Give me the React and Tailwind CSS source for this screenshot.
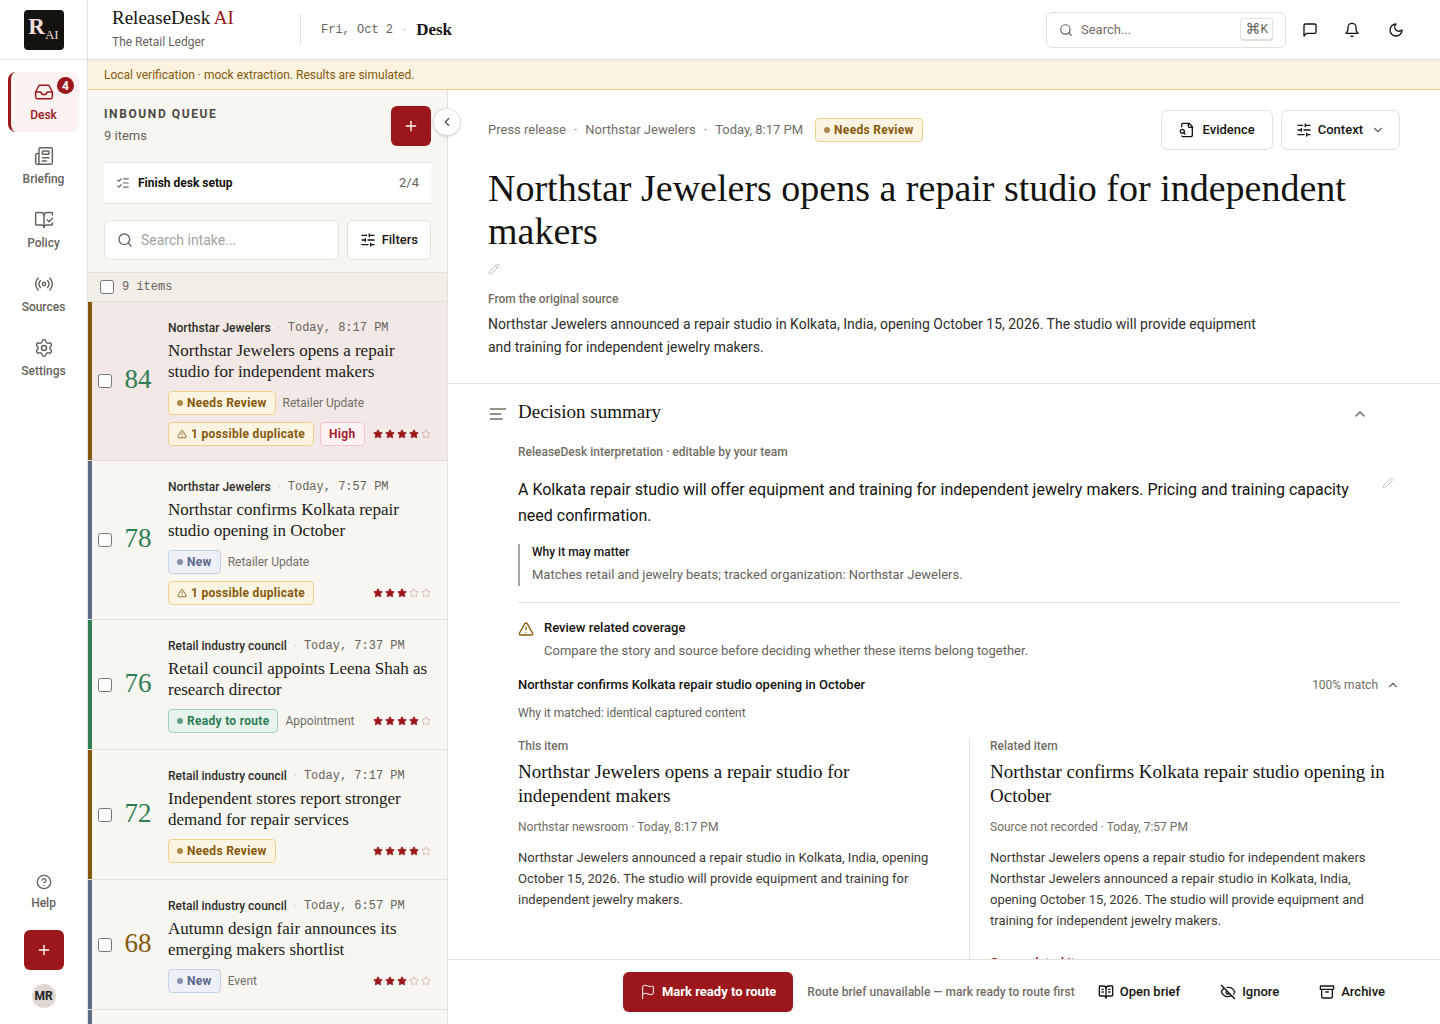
import { useState } from 'react'
import clsx from 'clsx'
import {
  Archive, BookOpenCheck, BookOpenText, ChevronDown, ChevronLeft, ChevronUp, CircleHelp,
  EyeOff, Flag, Inbox, ListChecks, Newspaper, Pencil, Plus, Radio, Search, Settings,
  SlidersHorizontal, Star, TriangleAlert,
} from 'lucide-react'

const SERIF = "font-['Liberation_Serif',serif]"
const MONO = "font-['Liberation_Mono',monospace]"

// --- Icons that are not in the package in this shape ---
function Glyph({ size = 16, className, children }) {
  return (
    <svg
      width={size}
      height={size}
      viewBox="0 0 24 24"
      fill="none"
      stroke="currentColor"
      strokeWidth="2"
      strokeLinecap="round"
      strokeLinejoin="round"
      className={className}
      aria-hidden="true"
    >
      {children}
    </svg>
  )
}

const MessageIcon = () => (
  <Glyph><path d="M21 15a2 2 0 0 1-2 2H7l-4 4V5a2 2 0 0 1 2-2h14a2 2 0 0 1 2 2z" /></Glyph>
)

const BellIcon = () => (
  <Glyph>
    <path d="M6 8a6 6 0 0 1 12 0c0 7 3 9 3 9H3s3-2 3-9" />
    <path d="M10.3 21a1.94 1.94 0 0 0 3.4 0" />
  </Glyph>
)

const MoonIcon = () => (
  <Glyph><path d="M12 3a6 6 0 0 0 9 9 9 9 0 1 1-9-9Z" /></Glyph>
)

const EvidenceIcon = () => (
  <Glyph>
    <path d="M14 2v4a2 2 0 0 0 2 2h4" />
    <path d="M4.268 21a2 2 0 0 0 1.727 1H18a2 2 0 0 0 2-2V7l-5-5H6a2 2 0 0 0-2 2v3" />
    <path d="m9 18-1.5-1.5" />
    <circle cx="5" cy="14" r="3" />
  </Glyph>
)

const SummaryIcon = () => (
  <Glyph size={20} className="text-[#716e66]"><path d="M21 6H3M15 12H3M17 18H3" /></Glyph>
)

// --- Data ---
const NAV = [
  { label: 'Desk', icon: Inbox, active: true, count: 4 },
  { label: 'Briefing', icon: Newspaper },
  { label: 'Policy', icon: BookOpenCheck },
  { label: 'Sources', icon: Radio },
  { label: 'Settings', icon: Settings },
]

const STATUS = {
  review: { label: 'Needs Review', bar: 'bg-[#85590b]', badge: 'border-[#ecd28e] bg-[#fcf4e2] text-[#85590b]' },
  new:    { label: 'New', bar: 'bg-[#5e6b87]', badge: 'border-[#c6d1e3] bg-[#edf0f6] text-[#5a6889]' },
  ready:  { label: 'Ready to route', bar: 'bg-[#2e7d54]', badge: 'border-[#a3d4bb] bg-[#e8f3ed] text-[#2e7d54]' },
}

const ITEMS = [
  { id: 1, score: 84, status: 'review', org: 'Northstar Jewelers', time: 'Today, 8:17 PM', title: 'Northstar Jewelers opens a repair studio for independent makers', category: 'Retailer Update', duplicate: true, priority: 'High', stars: 4 },
  { id: 2, score: 78, status: 'new', org: 'Northstar Jewelers', time: 'Today, 7:57 PM', title: 'Northstar confirms Kolkata repair studio opening in October', category: 'Retailer Update', duplicate: true, stars: 3 },
  { id: 3, score: 76, status: 'ready', org: 'Retail industry council', time: 'Today, 7:37 PM', title: 'Retail council appoints Leena Shah as research director', category: 'Appointment', stars: 4 },
  { id: 4, score: 72, status: 'review', org: 'Retail industry council', time: 'Today, 7:17 PM', title: 'Independent stores report stronger demand for repair services', stars: 4 },
  { id: 5, score: 68, status: 'new', org: 'Retail industry council', time: 'Today, 6:57 PM', title: 'Autumn design fair announces its emerging makers shortlist', category: 'Event', stars: 3 },
]

// --- Small pieces ---
function StatusBadge({ status }) {
  const { label, badge } = STATUS[status]
  return (
    <span className={clsx('flex h-6 shrink-0 items-center gap-1 rounded border px-2 text-[12px] font-bold tracking-wide whitespace-nowrap', badge)}>
      <span className="size-1.5 rounded-full bg-current opacity-70" />
      {label}
    </span>
  )
}

function Stars({ value }) {
  return (
    <span className="ml-auto flex shrink-0 gap-0.5 text-[#9c171b]" role="img" aria-label={`${value} of 5 stars`}>
      {[1, 2, 3, 4, 5].map((n) => (
        <Star key={n} size={10} className={n <= value ? 'fill-current' : 'opacity-30'} />
      ))}
    </span>
  )
}

function QueueItem({ item, selected }) {
  return (
    <li className={clsx('flex border-b', selected ? 'border-[#e2d8d5] bg-[#f2e8e5]' : 'border-[#e3e2da]')}>
      <span className={clsx('w-1 shrink-0', STATUS[item.status].bar)} />
      <div className="flex min-w-0 flex-1 items-center pr-4 pl-1.5">
        <input type="checkbox" aria-label={`Select ${item.title}`} className="size-3.5 shrink-0" />
        <span
          className={clsx('w-[52px] shrink-0 pb-1 text-center text-[27px] leading-7', SERIF,
            item.score >= 70 ? 'text-[#2e7d54]' : 'text-[#85590b]')}
        >
          {item.score}
        </span>
        <div className={clsx('min-w-0 flex-1 pt-4 pl-1', item.duplicate ? 'pb-3.5' : 'pb-4')}>
          <p className="flex items-center leading-5">
            <span className="text-[12px] font-medium text-[#2e2d29]">{item.org}</span>
            <span className="w-[17px] text-center text-[12px] text-[#c9c6bd]">·</span>
            <span className={clsx('text-[12px] text-[#66635b]', MONO)}>{item.time}</span>
          </p>
          <h3 className={clsx('mt-0.5 text-[17px] leading-[21px] text-[#1b1a17]', SERIF)}>
            <a href="#item">{item.title}</a>
          </h3>
          <div className="mt-[9px] flex items-center gap-[7px]">
            <StatusBadge status={item.status} />
            {item.category && <span className="text-[12px] text-[#716e66]">{item.category}</span>}
            {!item.duplicate && <Stars value={item.stars} />}
          </div>
          {item.duplicate && (
            <div className="mt-[7px] flex items-center gap-1.5">
              <span className="flex h-6 shrink-0 items-center gap-1 rounded border border-[#ecd28e] bg-[#fcf4e2] px-2 text-[12px] font-bold tracking-wide text-[#85590b]">
                <TriangleAlert size={10} />
                1 possible duplicate
              </span>
              {item.priority && (
                <span className="flex h-6 items-center rounded border border-[#f0c6c9] bg-[#fdf2f3] px-2 text-[12px] font-bold tracking-wide text-[#a81c2f]">
                  {item.priority}
                </span>
              )}
              <Stars value={item.stars} />
            </div>
          )}
        </div>
      </div>
    </li>
  )
}

function ActionButton({ icon: Icon, children }) {
  return (
    <button type="button" className="flex h-10 items-center gap-1.5 px-[15px] text-[13px] font-medium">
      <Icon size={16} />
      {children}
    </button>
  )
}

function CompareColumn({ label, title, source, children, link, className }) {
  return (
    <div className={className}>
      <p className="text-[12px] leading-4 font-medium text-[#716e66]">{label}</p>
      <h4 className={clsx('mt-1.5 text-[19px] leading-6', SERIF)}>{title}</h4>
      <p className="mt-[9px] text-[12px] leading-5 text-[#716e66]">{source}</p>
      <p className="mt-2.5 text-[13px] leading-[21px] text-[#3b3934]">{children}</p>
      {link && (
        <a href="#related" className="mt-[22px] block text-[13px] leading-5 font-medium text-[#9c171b]">{link}</a>
      )}
    </div>
  )
}

// --- Regions ---
function Sidebar() {
  return (
    <aside className="flex w-[88px] shrink-0 flex-col border-r border-[#e3e2da] bg-white">
      <div className="flex h-[60px] shrink-0 items-center justify-center border-b border-[#e3e2da]">
        <div className={clsx('flex size-10 items-center justify-center rounded bg-[#14130f] text-[#f3dfdb]', SERIF)}>
          <span className="pb-1.5 text-[23px] leading-6 font-bold">R</span>
          <span className="pt-2.5 text-[13px] leading-4">AI</span>
        </div>
      </div>
      <nav className="flex flex-col gap-1 px-2 pt-3">
        {NAV.map(({ label, icon: Icon, active, count }) => (
          <a
            key={label}
            href={`#${label.toLowerCase()}`}
            className={clsx(
              'relative flex h-[60px] flex-col items-center justify-center gap-[5px] rounded-lg pt-px text-[12px] leading-4 font-medium',
              active ? 'border-l-3 border-[#9c171b] bg-[#fcf2f2] pr-[3px] text-[#9c171b]' : 'text-[#66635b]',
            )}
          >
            <Icon size={20} strokeWidth={1.75} />
            {label}
            {count && (
              <span className="absolute top-[5px] right-[5px] flex size-[17px] items-center justify-center rounded-full bg-[#9c171b] text-[12px] font-bold text-white">
                {count}
              </span>
            )}
          </a>
        ))}
      </nav>
      <div className="mt-auto flex flex-col items-center pb-4">
        <a href="#help" className="flex flex-col items-center gap-[3px] text-[12px] leading-5 font-medium text-[#66635b]">
          <CircleHelp size={16} />
          Help
        </a>
        <button type="button" aria-label="New item" className="mt-[17px] flex size-10 items-center justify-center rounded-md bg-[#9c171b] text-white">
          <Plus size={16} />
        </button>
        <button type="button" className="mt-3.5 flex size-6 items-center justify-center rounded-full bg-[#dfd8d0] text-[12px] font-bold text-[#23221f]">
          MR
        </button>
      </div>
    </aside>
  )
}

function TopBar() {
  return (
    <header className="flex h-[60px] shrink-0 items-center border-b border-[#e3e2da] bg-white pr-[26px] pl-6">
      <div className="w-[188px] pb-0.5">
        <p className={clsx('text-[19px] leading-6', SERIF)}>
          ReleaseDesk <span className="text-[#9c171b]">AI</span>
        </p>
        <p className="mt-0.5 text-[12px] leading-5 text-[#66635b]">The Retail Ledger</p>
      </div>
      <div className="flex h-8 items-center gap-2.5 border-l border-[#e3e2da] pl-5">
        <span className={clsx('text-[12px] text-[#66635b]', MONO)}>Fri, Oct 2</span>
        <span className="text-[12px] text-[#a5a298]">·</span>
        <span className={clsx('text-[17px] font-bold', SERIF)}>Desk</span>
      </div>
      <label className="ml-auto flex h-9 w-60 items-center rounded-md border border-[#e3e2da] px-3 text-[#66635b]">
        <Search size={14} className="shrink-0" />
        <input
          type="search"
          aria-label="Search"
          placeholder="Search..."
          className="ml-2 min-w-0 flex-1 text-[13px] outline-none placeholder:text-[#716e66]"
        />
        <kbd className="flex h-[23px] items-center rounded-sm border border-b-2 border-[#e3e2da] px-1 font-['Roboto','DejaVu_Sans',sans-serif] text-[12px] text-[#66635b]">
          <span className="text-[15px]">⌘</span>K
        </kbd>
      </label>
      <div className="flex items-center">
        <button type="button" aria-label="Messages" className="flex h-9 w-12 items-center justify-center"><MessageIcon /></button>
        <button type="button" aria-label="Notifications" className="flex size-9 items-center justify-center"><BellIcon /></button>
        <button type="button" aria-label="Dark mode" className="ml-2 flex size-9 items-center justify-center"><MoonIcon /></button>
      </div>
    </header>
  )
}

function Queue() {
  return (
    <section className="relative flex w-[360px] shrink-0 flex-col border-r border-[#e3e2da] bg-[#f7f6f1]">
      <div className="px-4 pt-4 pb-3">
        <div className="flex items-start justify-between">
          <div>
            <h2 className="text-[12px] leading-4 font-bold tracking-[1.6px] text-[#4b4943] uppercase">Inbound queue</h2>
            <p className="mt-1 text-[13px] leading-5 text-[#66635b]">9 items</p>
          </div>
          <button type="button" aria-label="Add to queue" className="flex size-10 items-center justify-center rounded-md bg-[#9c171b] text-white">
            <Plus size={16} />
          </button>
        </div>
        <button type="button" className="mt-4 flex h-[42px] w-full items-center border-y border-[#e3e2da] bg-white px-3 text-[#66635b]">
          <ListChecks size={14} />
          <span className="ml-2 text-[12px] font-bold text-[#14130f]">Finish desk setup</span>
          <span className="ml-auto text-[13px]">2/4</span>
        </button>
        <div className="mt-4 flex gap-2">
          <label className="flex h-10 min-w-0 flex-1 items-center rounded-md border border-[#e3e2da] bg-white px-3 text-[#66635b]">
            <Search size={16} className="shrink-0" />
            <input
              type="search"
              aria-label="Search intake"
              placeholder="Search intake..."
              className="ml-2 min-w-0 flex-1 text-[14px] outline-none placeholder:text-[#a3a49e]"
            />
          </label>
          <button type="button" className="flex h-10 items-center gap-1.5 rounded-md border border-[#e3e2da] bg-white px-3 text-[13px] font-medium">
            <SlidersHorizontal size={16} />
            Filters
          </button>
        </div>
      </div>
      <label className={clsx('flex h-[30px] shrink-0 items-center gap-2 border-y border-[#e3e2da] bg-[#f2efe9] px-3 text-[12px] text-[#66635b]', MONO)}>
        <input type="checkbox" className="size-3.5" />
        9 items
      </label>
      <div className="flex min-h-0 flex-1 flex-col overflow-hidden">
        <ul className="shrink-0">
          {ITEMS.map((item) => (
            <QueueItem key={item.id} item={item} selected={item.id === 1} />
          ))}
        </ul>
        <div className="w-1 flex-1 bg-[#5e6b87]" />
      </div>
      <button
        type="button"
        aria-label="Collapse queue"
        className="absolute top-[18px] -right-3.5 z-10 flex size-7 items-center justify-center rounded-full border border-[#e3e2da] bg-white text-[#4b4943] shadow-sm"
      >
        <ChevronLeft size={14} />
      </button>
    </section>
  )
}

function Story() {
  return (
    <div className="shrink-0 border-b border-[#e3e2da] px-10 pt-5 pb-6">
      <div className="flex items-center justify-between">
        <div className="flex items-center gap-3">
          <p className="text-[13px] text-[#716e66]">
            Press release<span className="px-2">·</span>Northstar Jewelers<span className="px-2">·</span>Today, 8:17 PM
          </p>
          <StatusBadge status="review" />
        </div>
        <div className="flex gap-2">
          <button type="button" className="flex h-10 items-center gap-2 rounded-md border border-[#e3e2da] px-[17px] text-[13px] font-medium">
            <EvidenceIcon />
            Evidence
          </button>
          <button type="button" className="flex h-10 items-center gap-1.5 rounded-md border border-[#e3e2da] px-3.5 text-[13px] font-medium">
            <SlidersHorizontal size={16} />
            Context
            <ChevronDown size={14} className="ml-0.5 text-[#66635b]" />
          </button>
        </div>
      </div>
      <h1 className={clsx('mt-[17px] text-[38px] leading-[43px] text-[#14130f]', SERIF)}>
        Northstar Jewelers opens a repair studio for independent makers
      </h1>
      <button type="button" aria-label="Edit headline" className="mt-2.5 block text-[#aaa79e]">
        <Pencil size={12} strokeWidth={1.5} />
      </button>
      <p className="mt-4 text-[12px] leading-4 font-medium text-[#716e66]">From the original source</p>
      <p className="mt-1.5 max-w-[780px] text-[14px] leading-[23px] text-[#2e2d29]">
        Northstar Jewelers announced a repair studio in Kolkata, India, opening October 15, 2026. The studio will
        provide equipment and training for independent jewelry makers.
      </p>
    </div>
  )
}

function DecisionSummary() {
  const [open, setOpen] = useState(true)

  return (
    <div className="px-10 pt-4">
      <div className="flex items-center gap-2.5">
        <SummaryIcon />
        <h2 className={clsx('pb-1 text-[19px] leading-6', SERIF)}>Decision summary</h2>
        <button type="button" aria-label="Toggle summary" onClick={() => setOpen(!open)} className="mr-8 ml-auto text-[#66635b]">
          <ChevronUp size={16} />
        </button>
      </div>
      {open && (
        <div className="pt-4 pl-[30px]">
          <p className="text-[12px] leading-4 font-medium text-[#716e66]">ReleaseDesk interpretation · editable by your team</p>
          <div className="mt-[17px] flex items-start justify-between">
            <p className="max-w-[840px] text-[16px] leading-[26px] text-[#14130f]">
              A Kolkata repair studio will offer equipment and training for independent jewelry makers. Pricing and
              training capacity need confirmation.
            </p>
            <button type="button" aria-label="Edit summary" className="mr-1.5 text-[#bdbab2]">
              <Pencil size={12} strokeWidth={1.5} />
            </button>
          </div>
          <div className="mt-[15px] border-l-2 border-[#a9a69d] pl-3">
            <p className="text-[12px] leading-4 font-medium">Why it may matter</p>
            <p className="mt-1 text-[13px] leading-[22px] text-[#66635b]">
              Matches retail and jewelry beats; tracked organization: Northstar Jewelers.
            </p>
          </div>
          <div className="mt-4 flex gap-2.5 border-t border-[#e3e2da] pt-4">
            <TriangleAlert size={16} className="mt-0.5 text-[#85590b]" />
            <div>
              <h3 className="text-[13px] leading-[18px] font-medium">Review related coverage</h3>
              <p className="mt-1 text-[13px] leading-5 text-[#66635b]">
                Compare the story and source before deciding whether these items belong together.
              </p>
            </div>
          </div>
          <div className="mt-3.5 flex items-center justify-between">
            <h3 className="text-[13px] leading-5 font-medium">Northstar confirms Kolkata repair studio opening in October</h3>
            <button type="button" className="flex items-center gap-2 text-[12px] text-[#716e66]">
              100% match
              <ChevronUp size={14} />
            </button>
          </div>
          <p className="mt-2 text-[12px] leading-5 text-[#66635b]">Why it matched: identical captured content</p>
          <div className="mt-[15px] grid grid-cols-2 gap-5">
            <CompareColumn
              className="pr-4"
              label="This item"
              title="Northstar Jewelers opens a repair studio for independent makers"
              source="Northstar newsroom · Today, 8:17 PM"
            >
              Northstar Jewelers announced a repair studio in Kolkata, India, opening October 15, 2026. The studio will
              provide equipment and training for independent jewelry makers.
            </CompareColumn>
            <CompareColumn
              className="border-l border-[#e3e2da] pl-5"
              label="Related item"
              title="Northstar confirms Kolkata repair studio opening in October"
              source="Source not recorded · Today, 7:57 PM"
              link="Open related item"
            >
              Northstar Jewelers opens a repair studio for independent makers
              <br />
              Northstar Jewelers announced a repair studio in Kolkata, India, opening October 15, 2026. The studio will
              provide equipment and training for independent jewelry makers.
            </CompareColumn>
          </div>
        </div>
      )}
    </div>
  )
}

function ActionBar() {
  return (
    <footer className="flex shrink-0 items-center justify-end border-t border-[#e3e2da] bg-white py-3 pr-10">
      <button type="button" className="mr-3.5 flex h-10 items-center gap-1.5 rounded-md bg-[#9c171b] px-[17px] text-[13px] font-bold text-white">
        <Flag size={16} strokeWidth={1.5} />
        Mark ready to route
      </button>
      <p className="mr-2 text-[12px] font-medium text-[#716e66]">Route brief unavailable — mark ready to route first</p>
      <div className="flex gap-2.5">
        <ActionButton icon={BookOpenText}>Open brief</ActionButton>
        <ActionButton icon={EyeOff}>Ignore</ActionButton>
        <ActionButton icon={Archive}>Archive</ActionButton>
      </div>
    </footer>
  )
}

export default function App() {
  return (
    <div className="flex h-screen overflow-hidden bg-white font-['Roboto',sans-serif] text-[#14130f]">
      <Sidebar />
      <div className="flex min-w-0 flex-1 flex-col">
        <TopBar />
        <p className="h-[30px] shrink-0 border-b border-[#ecd28e] bg-[#fbf3e0] px-4 text-[12px] leading-[30px] text-[#85590b]">
          Local verification · mock extraction. Results are simulated.
        </p>
        <div className="flex min-h-0 flex-1">
          <Queue />
          <main className="flex min-w-0 flex-1 flex-col">
            <div className="min-h-0 flex-1 overflow-hidden">
              <Story />
              <DecisionSummary />
            </div>
            <ActionBar />
          </main>
        </div>
      </div>
    </div>
  )
}
